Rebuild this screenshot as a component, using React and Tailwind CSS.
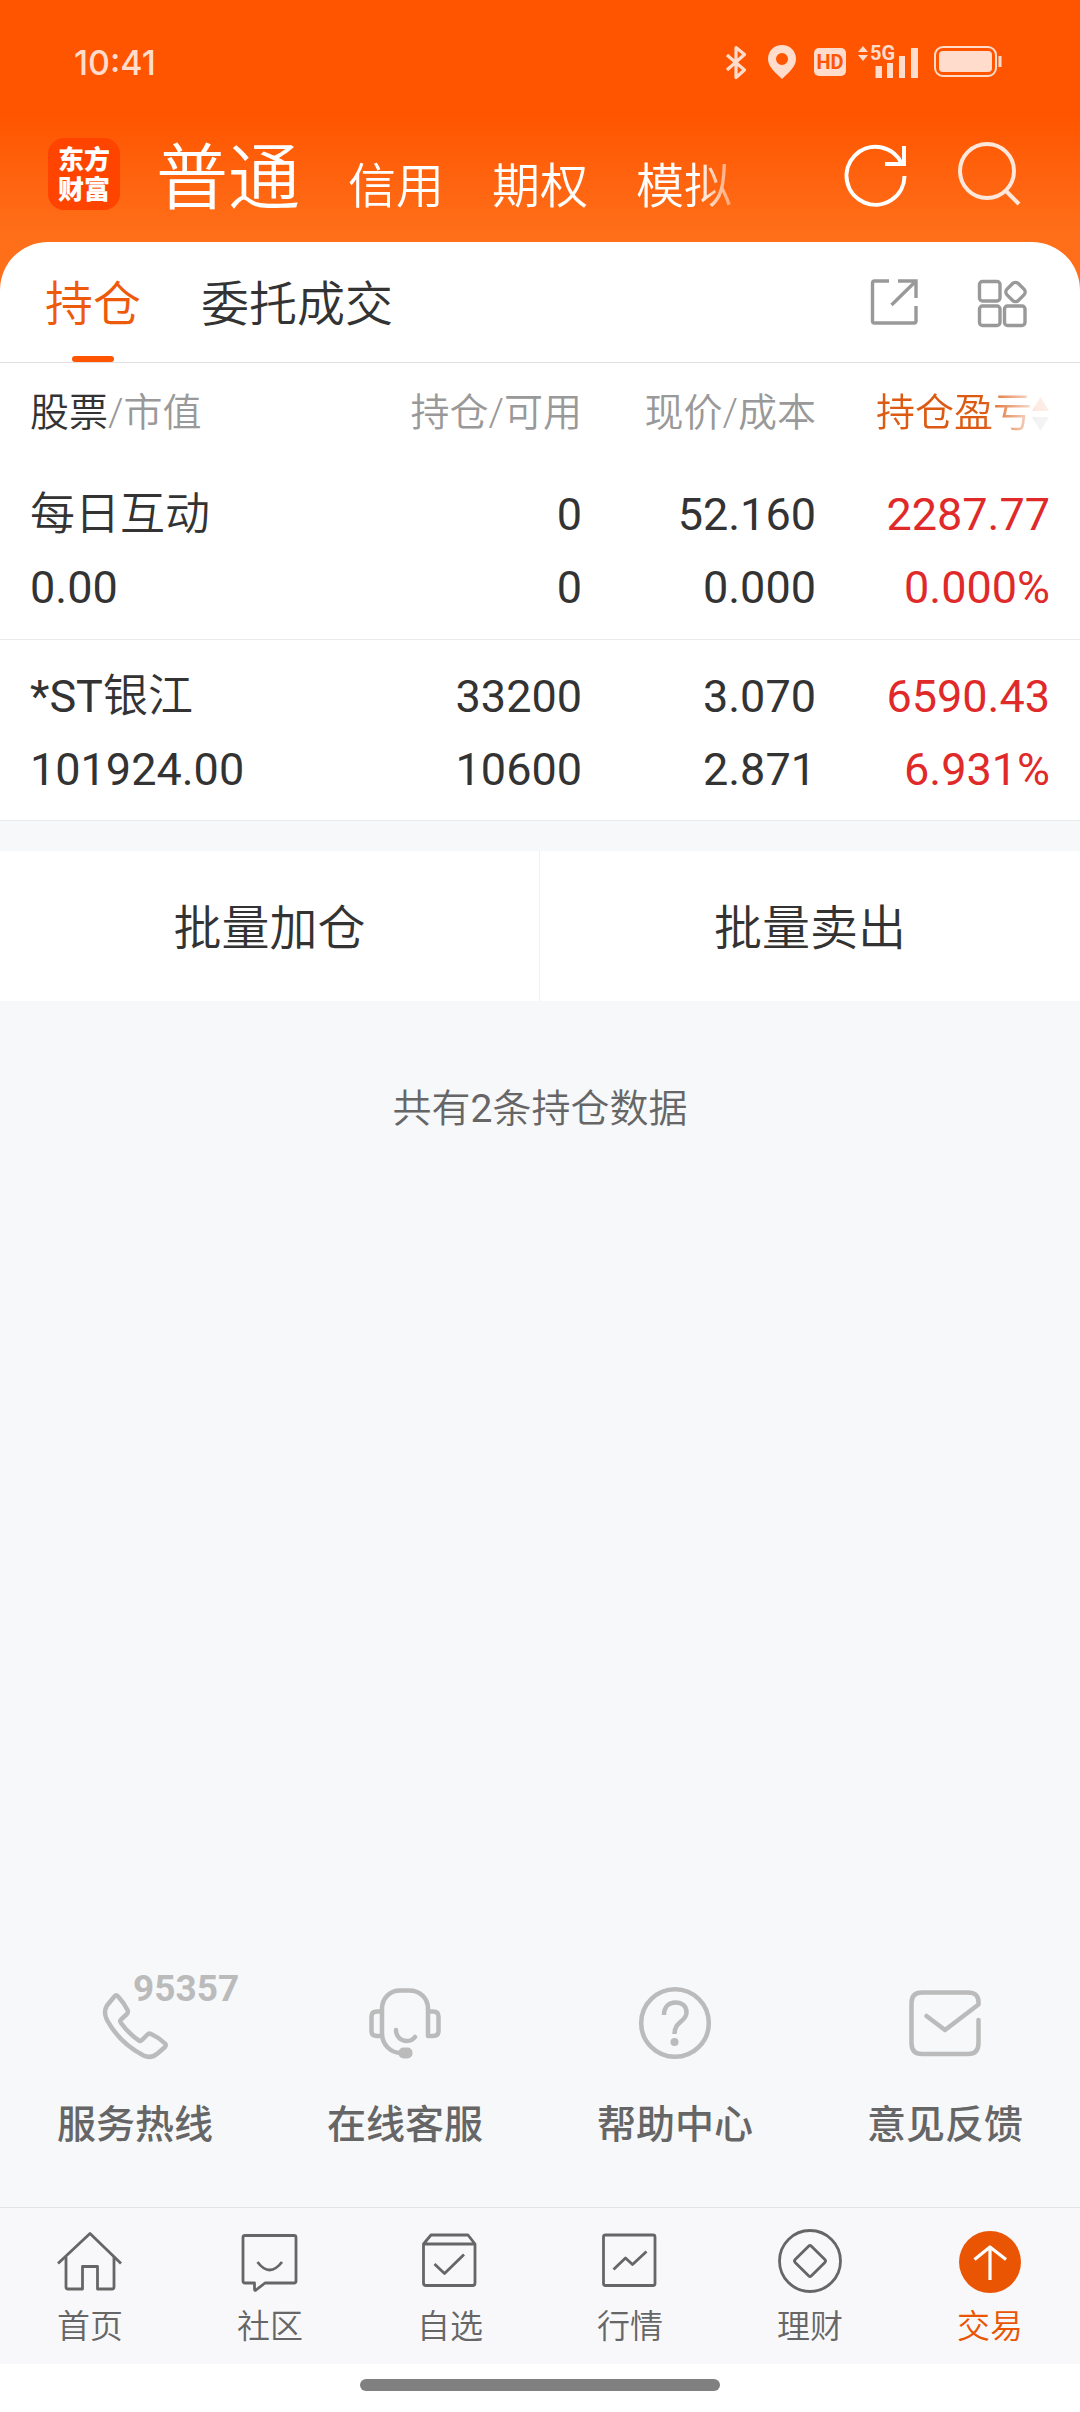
import React from 'react';

const accounts = ['信用', '期权', '模拟'];

const holdings = [
  {
    name: '每日互动',
    value: '0.00',
    amount: '0',
    available: '0',
    price: '52.160',
    cost: '0.000',
    profit: '2287.77',
    rate: '0.000%',
  },
  {
    mark: '*ST',
    name: '银江',
    value: '101924.00',
    amount: '33200',
    available: '10600',
    price: '3.070',
    cost: '2.871',
    profit: '6590.43',
    rate: '6.931%',
  },
];

const services = [
  { label: '服务热线', icon: <PhoneIcon />, badge: '95357' },
  { label: '在线客服', icon: <HeadsetIcon /> },
  { label: '帮助中心', icon: <HelpIcon /> },
  { label: '意见反馈', icon: <MailIcon /> },
];

const tabs = [
  { label: '首页', icon: <HomeIcon /> },
  { label: '社区', icon: <CommunityIcon /> },
  { label: '自选', icon: <WatchlistIcon /> },
  { label: '行情', icon: <MarketIcon /> },
  { label: '理财', icon: <WealthIcon /> },
  { label: '交易', icon: <TradeIcon />, active: true },
];

function PhoneIcon() {
  return (
    <svg width="80" height="78" viewBox="0 0 80 78" fill="none" stroke="currentColor" strokeWidth="4.5" strokeLinejoin="round">
      <path d="M19 12Q21 8.500 23.500 12Q29 18 32.500 25Q33.500 27 32 29L26 34.500Q24.500 36 26 38Q34 49 44 55.500Q45.500 56.500 47 55L52.500 49.500Q54 48 56 49Q64 52.500 70 58.500Q71.500 60 70 62L62.500 68.500Q56 74 48.500 70.500Q24.500 58 12 35Q8 27 12 20.500Z" />
    </svg>
  );
}

function HeadsetIcon() {
  return (
    <svg width="80" height="78" viewBox="0 0 80 78" fill="none" stroke="currentColor" strokeWidth="4.5" strokeLinecap="round" strokeLinejoin="round">
      <path d="M36 68C26 68 17 60 17 48V24C17 13 25 5.500 35 5.500H44C55 5.500 63 13 63 24V51H68Q73.500 51 73.500 46V31.500Q73.500 26.500 68 26.500H63" />
      <path d="M17 26.500H12Q6.500 26.500 6.500 31.500V46Q6.500 51 12 51H17" />
      <path d="M31 45C31 52 36 56 42 56Q47 56 50 52" />
      <rect x="33.500" y="62.500" width="14" height="11" rx="5" fill="currentColor" stroke="none" />
    </svg>
  );
}

function HelpIcon() {
  return (
    <svg width="80" height="78" viewBox="0 0 80 78" fill="none" stroke="currentColor" strokeWidth="4.500">
      <circle cx="40" cy="38" r="33.800" />
      <path d="M29 30C29 22 33.500 17.500 40.500 17.500C47.500 17.500 51.500 21.500 51.500 27.500C51.500 37 39.500 36 39.500 49" />
      <circle cx="39.500" cy="57" r="4" fill="currentColor" stroke="none" />
    </svg>
  );
}

function MailIcon() {
  return (
    <svg width="80" height="78" viewBox="0 0 80 78" fill="none" stroke="currentColor" strokeWidth="4.500" strokeLinecap="round" strokeLinejoin="round">
      <path d="M21.500 31L40 45L73.500 19.500Q74.500 7.500 63 7.500H17Q6.500 7.500 6.500 18V58Q6.500 69 17 69H63Q73.500 69 73.500 58V35" />
    </svg>
  );
}

function TabSvg({ children }) {
  return (
    <svg width="72" height="72" viewBox="0 0 72 72" fill="none" stroke="currentColor" strokeWidth="2.800" strokeLinejoin="round">
      {children}
    </svg>
  );
}

function HomeIcon() {
  return (
    <TabSvg>
      <path d="M4 38.500L36 8.500L67 38.500" />
      <path d="M12 32V62Q12 64 14 64H28.500V41.500H43.500V64H58Q60 64 60 62V32" />
    </TabSvg>
  );
}

function CommunityIcon() {
  return (
    <TabSvg>
      <path d="M11 10.500H60Q62 10.500 62 12.500V56Q62 58 60 58H31L22 65Q20.500 66 20.500 64V58H11Q9 58 9 56V12.500Q9 10.500 11 10.500Z" />
      <path d="M23.500 37Q35.500 53 48 37" />
    </TabSvg>
  );
}

function WatchlistIcon() {
  return (
    <TabSvg>
      <path d="M9.500 19L17 10H54L61 19V58Q61 60.500 58.500 60.500H12Q9.500 60.500 9.500 58ZH61" />
      <path d="M20.500 39L30.500 48.500L50 29.500" />
    </TabSvg>
  );
}

function MarketIcon() {
  return (
    <TabSvg>
      <rect x="9.500" y="10" width="51.500" height="50.500" rx="2" />
      <path d="M19.500 44.500L31.500 33L38.500 39.500L52.500 26.500" />
    </TabSvg>
  );
}

function WealthIcon() {
  return (
    <TabSvg>
      <circle cx="36" cy="36" r="30.500" />
      <rect x="24.500" y="24.500" width="23" height="23" rx="2" transform="rotate(45 36 36)" />
    </TabSvg>
  );
}

function TradeIcon() {
  return (
    <TabSvg>
      <circle cx="36" cy="37" r="31" fill="currentColor" stroke="none" />
      <path d="M36 55V22M20.500 34.500L36 22L52 34.500" stroke="#fff" strokeWidth="3.200" />
    </TabSvg>
  );
}

function StatusBar() {
  return (
    <div className="flex h-[124px] items-center justify-between pl-[74px] pr-[78px] text-[#ffdccc]">
      <span className="pt-0.5 font-[Inter,sans-serif] text-[34px] font-medium leading-none">10:41</span>
      <div className="flex items-center">
        <svg width="24" height="36" viewBox="0 0 24 36" fill="none" stroke="currentColor" strokeWidth="3.200" strokeLinejoin="round">
          <path d="M3 11L20.500 26L12 33.500V3.500L20.500 10.500L3 26" />
        </svg>
        <svg className="ml-5" width="28" height="36" viewBox="0 0 28 36" fill="currentColor">
          <path fillRule="evenodd" d="M14 1C6 1 0 7 0 15C0 23 8 29 14 35C20 29 28 23 28 15C28 7 22 1 14 1ZM14 9A6 6 0 1 1 14 21A6 6 0 1 1 14 9Z" />
        </svg>
        <span className="ml-[18px] flex h-7 w-8 items-center justify-center rounded-[5px] bg-[#ffdccc] font-[Roboto,sans-serif] text-[20px] font-bold leading-none text-[#ff5500]">
          HD
        </span>
        <span className="relative ml-3">
          <svg width="60" height="34" viewBox="0 0 60 34" fill="currentColor">
            <path d="M0 7L5 1L10 7ZM0 10L5 16L10 10ZM17.500 21H24V33H17.500ZM29 18H35V33H29ZM41 11H47V33H41ZM53 3H60V33H53Z" />
          </svg>
          <span className="absolute left-3 top-0 font-[Roboto,sans-serif] text-[20px] font-bold leading-4">5G</span>
        </span>
        <svg className="ml-4" width="68" height="32" viewBox="0 0 68 32" fill="none" stroke="currentColor" strokeWidth="2">
          <rect x="1" y="1" width="61" height="29" rx="8" />
          <rect x="5" y="5" width="53" height="21" rx="4" fill="currentColor" stroke="none" />
          <path d="M66 10V21" strokeWidth="3" />
        </svg>
      </div>
    </div>
  );
}

function AccountBar() {
  return (
    <div className="flex h-[118px] items-center pl-12 pr-14 text-white">
      <a
        href="#home"
        className="mb-[18px] flex h-[72px] w-[72px] items-center justify-center rounded-2xl bg-[#ff4400] pb-0.5 text-[26px] font-black leading-[30px]"
      >
        <span className="w-[52px] break-all">东方财富</span>
      </a>
      <nav className="mb-3 ml-9 flex items-baseline gap-12 whitespace-nowrap [mask-image:linear-gradient(to_right,#000_calc(100%-36px),rgb(0_0_0/0.4))]">
        <button type="button" className="text-[72px] leading-[80px]">普通</button>
        {accounts.map((item) => (
          <button type="button" key={item} className="text-[48px] leading-[80px]">
            {item}
          </button>
        ))}
      </nav>
      <div className="mb-4 ml-auto flex gap-[46px]">
        <button type="button" aria-label="刷新">
          <svg width="68" height="70" viewBox="0 0 68 70" fill="none" stroke="currentColor" strokeWidth="4">
            <path d="M62.500 36A29 29 0 1 1 60 24" />
            <path d="M62 6V24H43" />
          </svg>
        </button>
        <button type="button" aria-label="搜索" className="opacity-85">
          <svg width="68" height="70" viewBox="0 0 68 70" fill="none" stroke="currentColor" strokeWidth="4">
            <circle cx="31" cy="31" r="27" />
            <path d="M49.500 50.500L63 64" />
          </svg>
        </button>
      </div>
    </div>
  );
}

function SheetTabs() {
  return (
    <div className="flex h-[121px] items-stretch border-b border-[#e0e0e0] pl-[45px] pr-[50px] text-[48px]">
      <button type="button" className="relative mr-[60px] pb-1 text-[#ee5a0c]">
        持仓
        <span className="absolute bottom-0 left-1/2 h-1.5 w-[42px] -translate-x-1/2 rounded-full bg-[#ff5500]" />
      </button>
      <button type="button" className="pb-1 text-[#333]">委托成交</button>
      <div className="ml-auto flex items-center gap-[54px] pt-1 text-[#999]">
        <button type="button" aria-label="分享">
          <svg width="52" height="56" viewBox="0 0 52 56" fill="none" stroke="currentColor" strokeWidth="3.400">
            <path d="M21 5H6.500Q4.500 5 4.500 7V45Q4.500 47 6.500 47H46Q48 47 48 45V30" />
            <path d="M30 5H48V22M48 5L23.500 29" />
          </svg>
        </button>
        <button type="button" aria-label="更多功能">
          <svg width="56" height="56" viewBox="0 0 56 56" fill="none" stroke="currentColor" strokeWidth="3.400">
            <rect x="5.500" y="5.500" width="20.500" height="19.500" rx="3" />
            <rect x="5.500" y="30" width="20.500" height="19.500" rx="3" />
            <rect x="30.500" y="30" width="20.500" height="19.500" rx="3" />
            <rect x="33.500" y="8" width="16" height="16" rx="4" transform="rotate(45 41.500 16)" />
          </svg>
        </button>
      </div>
    </div>
  );
}

function HoldingsTable() {
  return (
    <table className="w-full table-fixed text-right font-[Roboto,'Noto_Sans_CJK_SC',sans-serif] text-[45px] leading-[73px] text-[#333]">
      <colgroup>
        <col />
        <col className="w-[234px]" />
        <col className="w-[234px]" />
        <col className="w-[264px]" />
      </colgroup>
      <thead>
        <tr className="h-[95px] whitespace-nowrap text-[39px] text-[#999] [&>th]:pt-1.5">
          <th className="pl-[30px] text-left font-[350]">
            <span className="text-[#333]">股票</span>/市值
          </th>
          <th className="font-[350]">持仓/可用</th>
          <th className="font-[350]">现价/成本</th>
          <th className="pr-[30px] font-[350]">
            <button
              type="button"
              className="inline-flex items-center text-[#dc5a12] [mask-image:linear-gradient(to_right,#000_62%,rgb(0_0_0/0.3)_86%,rgb(0_0_0/0.12)_92%,rgb(0_0_0/0.1))]"
            >
              持仓盈亏
              <svg width="18" height="36" viewBox="0 0 18 36">
                <path d="M0 15L8.500 1L17 15Z" fill="#ee5a0c" />
                <path d="M0 21L8.500 35L17 21Z" fill="#999" />
              </svg>
            </button>
          </th>
        </tr>
      </thead>
      <tbody>
        {holdings.map((row) => (
          <tr key={row.name} className="h-[181px] border-b border-[#e8eaec] align-top font-normal [&>td]:pt-5">
            <td className="pl-[30px] text-left">
              <div>
                {row.mark}
                <span className="font-[350]">{row.name}</span>
              </div>
              <div>{row.value}</div>
            </td>
            <td>
              <div>{row.amount}</div>
              <div>{row.available}</div>
            </td>
            <td>
              <div>{row.price}</div>
              <div>{row.cost}</div>
            </td>
            <td className="pr-[30px] text-[#e02a2a]">
              <div>{row.profit}</div>
              <div>{row.rate}</div>
            </td>
          </tr>
        ))}
      </tbody>
    </table>
  );
}

export default function App() {
  return (
    <div className="flex min-h-screen flex-col bg-[#f7f8fa] font-['Noto_Sans_CJK_SC',sans-serif] font-[350]">
      <header className="bg-linear-to-b from-[#ff5500] from-40% to-[#ff6e18] to-80% pb-12">
        <StatusBar />
        <AccountBar />
      </header>

      <main className="-mt-12 flex flex-1 flex-col">
        <section className="rounded-t-[48px] bg-white">
          <SheetTabs />
          <HoldingsTable />
        </section>

        <div className="mt-[30px] grid grid-cols-2 bg-white text-[48px] text-[#333]">
          <button type="button" className="h-[150px] border-r border-[#f0f1f3] pb-1">批量加仓</button>
          <button type="button" className="h-[150px] pb-1">批量卖出</button>
        </div>

        <p className="mt-[78px] text-center font-[Roboto,'Noto_Sans_CJK_SC',sans-serif] text-[39px] leading-[60px] text-[#666]">
          共有<span className="font-normal">{holdings.length}</span>条持仓数据
        </p>

        <div className="mt-auto grid grid-cols-4 pb-14">
          {services.map((item) => (
            <a key={item.label} href="#service" className="flex flex-col items-center gap-7">
              <span className="relative text-[#bbb]">
                {item.icon}
                {item.badge && (
                  <span className="absolute -top-3 left-[38px] font-[Roboto,sans-serif] text-[37px] font-bold leading-8">
                    {item.badge}
                  </span>
                )}
              </span>
              <span className="text-[39px] font-medium leading-[60px] text-[#666]">{item.label}</span>
            </a>
          ))}
        </div>
      </main>

      <footer>
        <nav className="grid grid-cols-6 border-t border-[#e2e3e5] bg-[#f8f8fa] pb-[13px] pt-[17px]">
          {tabs.map((tab) => (
            <a
              key={tab.label}
              href="#tab"
              className={`flex flex-col items-center ${tab.active ? 'text-[#ea5504]' : 'text-[#666]'}`}
            >
              {tab.icon}
              <span className="text-[33px] leading-[54px]">{tab.label}</span>
            </a>
          ))}
        </nav>
        <div className="flex h-12 items-center justify-center bg-white pb-1.5">
          <div className="h-3 w-1/3 rounded-full bg-[#808080]" />
        </div>
      </footer>
    </div>
  );
}
